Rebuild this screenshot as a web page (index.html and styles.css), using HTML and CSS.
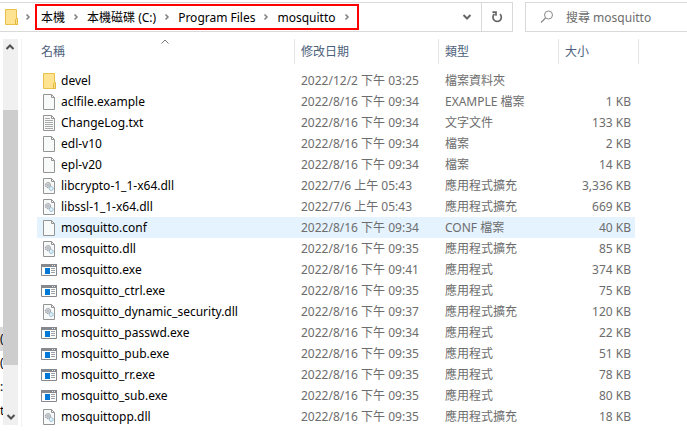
FILE: index.html
```html
<!DOCTYPE html>
<html lang="zh-Hant">
<head>
<meta charset="utf-8">
<title>mosquitto</title>
<link rel="stylesheet" href="styles.css">
</head>
<body>
<svg class="sprite" aria-hidden="true">
  <symbol id="folder" viewBox="0 0 16 16"><path d="M2.5.5h11v9h1v6h-12z" fill="#ffe391" stroke="#e8c04c"/><path d="M12.5 15.5v-5l1-1h1v6z" fill="#ffe08a" stroke="#e3b93f"/></symbol>
  <symbol id="file" viewBox="0 0 16 16"><path d="M2.500.5h8l3 3v12h-11z" fill="#f8f9f9" stroke="#949494"/><path d="M10.500.5v3h3" fill="none" stroke="#949494"/></symbol>
  <symbol id="text" viewBox="0 0 16 16"><use href="#file"/><path d="M4 3.500h5M4 5.500h8M4 7.500h8M4 9.500h8M4 11.500h8M4 13.500h8" stroke="#a8a8a8"/></symbol>
  <symbol id="dll" viewBox="0 0 16 16"><use href="#file"/><circle cx="7" cy="7" r="2.600" fill="#d8dcdf" stroke="#858b90" stroke-dasharray="1.300 .6"/><circle cx="7" cy="7" r="1" fill="#fff" stroke="#8d9499" stroke-width=".7"/><circle cx="10.200" cy="10.500" r="2" fill="#d5eaf6" stroke="#82aec6" stroke-dasharray="1.100 .5"/><circle cx="10.200" cy="10.500" r=".6" fill="#fff"/></symbol>
  <symbol id="exe" viewBox="0 0 16 16"><path d="M.5 2.500h15v11H.5z" fill="#fff" stroke="#85898d"/><path d="M0 2h16v3H0z" fill="#85898d"/><path d="M11 3h1v1h-1zM13 3h1v1h-1z" fill="#e8e8e8"/><path d="M4 6h5v6H4z" fill="#0078d7"/><path d="M10 6.500h4M10 8.500h4M10 10.500h4" stroke="#9da1a5"/></symbol>
  <symbol id="crumb" viewBox="0 0 8 8"><path d="M2.500 1.500L5 4 2.500 6.500" fill="none" stroke="#808080" stroke-width="1.500"/></symbol>
  <symbol id="down" viewBox="0 0 10 10"><path d="M1.500 3L5 6.500 8.500 3" fill="none" stroke="currentColor" stroke-width="2"/></symbol>
</svg>

<header class="toolbar">
  <div class="address">
    <svg class="icon place"><use href="#folder"/></svg>
    <svg class="chevron"><use href="#crumb"/></svg>
    <nav class="path" aria-label="路徑">
      <button>本機</button><svg class="chevron"><use href="#crumb"/></svg>
      <button>本機磁碟 (C:)</button><svg class="chevron"><use href="#crumb"/></svg>
      <button>Program Files</button><svg class="chevron"><use href="#crumb"/></svg>
      <button>mosquitto</button><svg class="chevron"><use href="#crumb"/></svg>
    </nav>
    <button class="tool history" aria-label="先前的位置"><svg width="10" height="10"><use href="#down"/></svg></button>
    <button class="tool refresh" aria-label="重新整理"><svg width="12" height="12" viewBox="0 0 12 12"><path d="M9 3.200A4.200 4.200 0 1 1 3.500 3M1.500 1.200H5v3.600" fill="none" stroke="currentColor" stroke-width="1.700"/></svg></button>
  </div>
  <label class="search">
    <svg width="14" height="14" viewBox="0 0 14 14"><circle cx="8.500" cy="5" r="4" fill="none" stroke="#8a8a8a"/><path d="M5.500 8L1 12.500" stroke="#8a8a8a" stroke-width="1.200"/></svg>
    <input type="search" placeholder="搜尋 mosquitto" aria-label="搜尋 mosquitto">
  </label>
</header>

<main class="content">
  <aside class="tree"><span class="current">(</span><span>(</span><span>:</span><span>t</span></aside>
  <div class="scrollbar">
    <button class="arrow up" aria-label="向上捲動"><svg width="10" height="10"><use href="#down"/></svg></button>
    <div class="track"><div class="thumb"></div></div>
    <button class="arrow" aria-label="向下捲動"><svg width="10" height="10"><use href="#down"/></svg></button>
  </div>
  <div class="list">
    <table>
      <colgroup><col class="c-name"><col class="c-date"><col class="c-type"><col class="c-size"></colgroup>
      <thead><tr>
        <th><button>名稱</button><svg class="sort" viewBox="0 0 8 5"><path d="M.5 4.500L4 1l3.500 3.500" fill="none" stroke="#777"/></svg></th>
        <th><button>修改日期</button></th><th><button>類型</button></th><th><button>大小</button></th>
      </tr></thead>
      <tbody>
        <tr><td><svg class="icon"><use href="#folder"/></svg>devel</td><td>2022/12/2 下午 03:25</td><td>檔案資料夾</td><td></td></tr>
        <tr><td><svg class="icon"><use href="#file"/></svg>aclfile.example</td><td>2022/8/16 下午 09:34</td><td>EXAMPLE 檔案</td><td>1 KB</td></tr>
        <tr><td><svg class="icon"><use href="#text"/></svg>ChangeLog.txt</td><td>2022/8/16 下午 09:34</td><td>文字文件</td><td>133 KB</td></tr>
        <tr><td><svg class="icon"><use href="#file"/></svg>edl-v10</td><td>2022/8/16 下午 09:34</td><td>檔案</td><td>2 KB</td></tr>
        <tr><td><svg class="icon"><use href="#file"/></svg>epl-v20</td><td>2022/8/16 下午 09:34</td><td>檔案</td><td>14 KB</td></tr>
        <tr><td><svg class="icon"><use href="#dll"/></svg>libcrypto-1_1-x64.dll</td><td>2022/7/6 上午 05:43</td><td>應用程式擴充</td><td>3,336 KB</td></tr>
        <tr><td><svg class="icon"><use href="#dll"/></svg>libssl-1_1-x64.dll</td><td>2022/7/6 上午 05:43</td><td>應用程式擴充</td><td>669 KB</td></tr>
        <tr class="hover"><td><svg class="icon"><use href="#file"/></svg>mosquitto.conf</td><td>2022/8/16 下午 09:34</td><td>CONF 檔案</td><td>40 KB</td></tr>
        <tr><td><svg class="icon"><use href="#dll"/></svg>mosquitto.dll</td><td>2022/8/16 下午 09:35</td><td>應用程式擴充</td><td>85 KB</td></tr>
        <tr><td><svg class="icon"><use href="#exe"/></svg>mosquitto.exe</td><td>2022/8/16 下午 09:41</td><td>應用程式</td><td>374 KB</td></tr>
        <tr><td><svg class="icon"><use href="#exe"/></svg>mosquitto_ctrl.exe</td><td>2022/8/16 下午 09:35</td><td>應用程式</td><td>75 KB</td></tr>
        <tr><td><svg class="icon"><use href="#dll"/></svg>mosquitto_dynamic_security.dll</td><td>2022/8/16 下午 09:37</td><td>應用程式擴充</td><td>120 KB</td></tr>
        <tr><td><svg class="icon"><use href="#exe"/></svg>mosquitto_passwd.exe</td><td>2022/8/16 下午 09:34</td><td>應用程式</td><td>22 KB</td></tr>
        <tr><td><svg class="icon"><use href="#exe"/></svg>mosquitto_pub.exe</td><td>2022/8/16 下午 09:35</td><td>應用程式</td><td>51 KB</td></tr>
        <tr><td><svg class="icon"><use href="#exe"/></svg>mosquitto_rr.exe</td><td>2022/8/16 下午 09:35</td><td>應用程式</td><td>78 KB</td></tr>
        <tr><td><svg class="icon"><use href="#exe"/></svg>mosquitto_sub.exe</td><td>2022/8/16 下午 09:35</td><td>應用程式</td><td>80 KB</td></tr>
        <tr><td><svg class="icon"><use href="#dll"/></svg>mosquittopp.dll</td><td>2022/8/16 下午 09:35</td><td>應用程式擴充</td><td>18 KB</td></tr>
      </tbody>
    </table>
  </div>
</main>
</body>
</html>
```
FILE: styles.css
```css
* { box-sizing: border-box; }
body {
  margin: 0;
  background: #fff;
  color: #000;
  font: 12px/21px "Noto Sans", "Noto Sans CJK TC", sans-serif;
}
button, input {
  margin: 0;
  padding: 0;
  border: 0;
  background: none;
  color: inherit;
  font: inherit;
}
.sprite { display: none; }
.icon { width: 16px; height: 16px; flex: none; }
.chevron { width: 8px; height: 8px; flex: none; }

.toolbar { display: flex; gap: 12px; padding-top: 2px; }
.address {
  display: flex;
  flex: 1;
  align-items: center;
  height: 30px;
  border: 1px solid #d9d9d9;
  border-left: 0;
}
.place { margin: 0 5px 0 3px; }
.path {
  display: flex;
  align-items: center;
  gap: 7px;
  height: 26px;
  margin-left: 3px;
  margin-right: auto;
  padding: 0 6px 0 4px;
  border: 2px solid #f00;
  white-space: nowrap;
}
.tool {
  display: grid;
  place-items: center;
  width: 30px;
  height: 28px;
  color: #666;
}
.history { border-right: 1px solid #d9d9d9; }
.search {
  display: flex;
  align-items: center;
  gap: 12px;
  width: 162px;
  height: 30px;
  padding-left: 14px;
  border: 1px solid #d9d9d9;
  border-right: 0;
}
.search input { flex: 1; min-width: 0; outline: 0; }
.search input::placeholder { color: #6d6d6d; opacity: 1; }

.content { display: flex; align-items: flex-start; padding-top: 7px; }
.tree {
  display: flex;
  flex-direction: column;
  width: 3px;
  padding-top: 288px;
  overflow: hidden;
  line-height: 24px;
}
.current { background: #d9d9d9; }
.scrollbar {
  display: flex;
  flex-direction: column;
  align-self: stretch;
  width: 15px;
  margin-bottom: 2px;
  background: #f0f0f0;
}
.arrow {
  display: grid;
  place-items: center;
  height: 17px;
  color: #505050;
}
.up { transform: rotate(180deg); }
.track { display: flex; flex-direction: column; flex: 1; }
.track::before { content: ""; flex: 54; }
.track::after { content: ""; flex: 43; }
.thumb { flex: 255; background: #cdcdcd; }

.list {
  flex: 1;
  margin-left: 3px;
  padding-left: 15px;
  border-left: 1px solid #f3f3f3;
}
table {
  width: 602px;
  border-collapse: collapse;
  table-layout: fixed;
}
.c-name { width: 258px; }
.c-date { width: 144px; }
.c-type { width: 120px; }
.c-size { width: 80px; }
th {
  position: relative;
  height: 31px;
  padding: 0 6px;
  color: #4c607a;
  font-weight: 400;
  text-align: left;
  vertical-align: top;
}
th::after {
  content: "";
  position: absolute;
  top: 0;
  right: 0;
  width: 1px;
  height: 25px;
  background: #e5e5e5;
}
th button { height: 25px; }
th:first-child, td:first-child { padding-left: 4px; }
.sort { position: absolute; top: 0; left: calc(50% - 5px); width: 8px; height: 5px; }
td {
  height: 21px;
  padding: 0 6px;
  color: #6d6d6d;
  white-space: nowrap;
}
td:first-child { display: flex; align-items: center; gap: 4px; color: #000; }
td:last-child { padding-right: 8px; text-align: right; }
.hover td { background: #e5f3ff; }
.hover td:last-child { background: linear-gradient(#e5f3ff, #e5f3ff) 0 0 / calc(100% - 4px) 100% no-repeat; }
```
